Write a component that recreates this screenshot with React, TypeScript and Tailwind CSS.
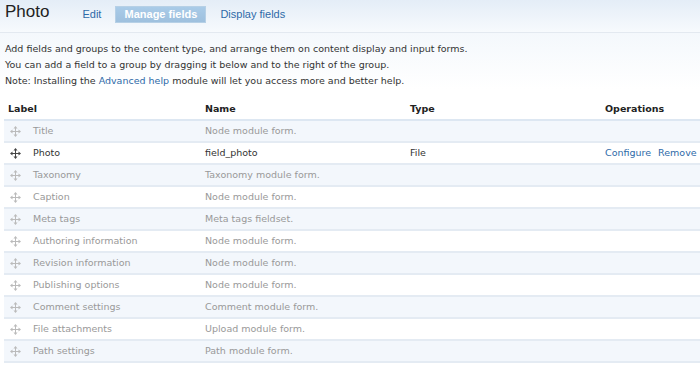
import React from "react";

type Row = { label: string; name: string; type?: string; ops?: boolean; active?: boolean };

const rows: Row[] = [
  { label: "Title", name: "Node module form." },
  { label: "Photo", name: "field_photo", type: "File", ops: true, active: true },
  { label: "Taxonomy", name: "Taxonomy module form." },
  { label: "Caption", name: "Node module form." },
  { label: "Meta tags", name: "Meta tags fieldset." },
  { label: "Authoring information", name: "Node module form." },
  { label: "Revision information", name: "Node module form." },
  { label: "Publishing options", name: "Node module form." },
  { label: "Comment settings", name: "Comment module form." },
  { label: "File attachments", name: "Upload module form." },
  { label: "Path settings", name: "Path module form." },
];

const DragIcon = ({ dark }: { dark?: boolean }) => (
  <svg width="11" height="11" viewBox="0 0 11 11" className={dark ? "text-[#444]" : "text-[#bbb]"}>
    <g fill="currentColor">
      <rect x="5" y="2" width="1" height="7" />
      <rect x="2" y="5" width="7" height="1" />
      <path d="M5.5 0 L7.5 2.5 L3.5 2.5 Z" />
      <path d="M5.5 11 L7.5 8.5 L3.5 8.5 Z" />
      <path d="M0 5.5 L2.5 3.5 L2.5 7.5 Z" />
      <path d="M11 5.5 L8.5 3.5 L8.5 7.5 Z" />
    </g>
  </svg>
);

const App = () => {
  return (
    <div className="w-[700px] h-[371px] bg-white overflow-hidden font-['DejaVu_Sans',Verdana,sans-serif] text-[9.5px] text-[#333]">
      <div className="h-[33px] border-b border-[#e3e9f0] bg-gradient-to-b from-[#e4edf7] to-[#f7fafd] flex items-start">
        <h1 className="pl-[5px] pt-[2px] text-[17px] leading-[20px] font-['Liberation_Sans',Arial,sans-serif] text-[#222]">
          Photo
        </h1>
        <div className="flex items-center ml-[33px] mt-[6px] text-[11px] font-['Liberation_Sans',Arial,sans-serif]">
          <span className="text-[#2e6aa8]">Edit</span>
          <span className="ml-[14px] h-[17px] w-[91px] flex items-center justify-center bg-gradient-to-b from-[#a9cbe8] to-[#9ec0de] border border-[#b6d0e6] text-white font-bold">
            Manage fields
          </span>
          <span className="ml-[14px] text-[#2e6aa8]">Display fields</span>
        </div>
      </div>

      <div className="px-[5px] pt-[8px] leading-[16px] bg-gradient-to-b from-[#f4f8fc] to-white">
        <p>Add fields and groups to the content type, and arrange them on content display and input forms.</p>
        <p>You can add a field to a group by dragging it below and to the right of the group.</p>
        <p>
          Note: Installing the <span className="text-[#2e6aa8]">Advanced help</span> module will let you access more and better help.
        </p>
      </div>

      <div className="ml-[4px] mt-[10px]">
        <div className="flex h-[22px] items-center font-bold text-[#222] border-b-2 border-[#dde7f2]">
          <div className="w-[201px] pl-[4px]">Label</div>
          <div className="w-[205px]">Name</div>
          <div className="w-[195px]">Type</div>
          <div>Operations</div>
        </div>
        {rows.map((r, i) => (
          <div
            key={r.label}
            className={`flex h-[22px] items-center border-b-2 border-[#e4ebf3] ${
              i % 2 === 0 ? "bg-[#f3f7fc]" : "bg-white"
            } ${r.active ? "text-[#333]" : "text-[#999]"}`}
          >
            <div className="w-[201px] flex items-center">
              <span className="ml-[6px] w-[23px] flex">
                <DragIcon dark={r.active} />
              </span>
              <span>{r.label}</span>
            </div>
            <div className="w-[205px]">{r.name}</div>
            <div className="w-[195px]">{r.type}</div>
            {r.ops && (
              <div className="flex gap-[7px] text-[#2e6aa8]">
                <span>Configure</span>
                <span>Remove</span>
              </div>
            )}
          </div>
        ))}
      </div>
    </div>
  );
};

export default App;
